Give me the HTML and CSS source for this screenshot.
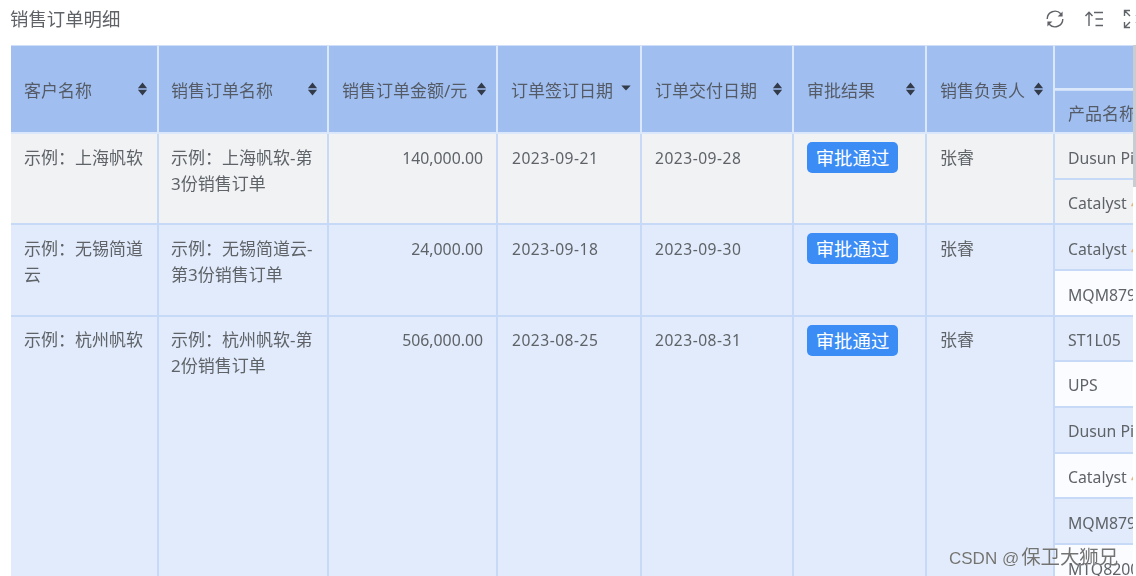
FILE: index.html
```html
<!DOCTYPE html>
<html lang="zh">
<head>
<meta charset="utf-8">
<title>销售订单明细</title>
<link rel="stylesheet" href="styles.css">
</head>
<body>
<svg class="defs" width="0" height="0" aria-hidden="true">
  <symbol id="sort" viewBox="0 0 10 14"><path d="M5 .5 9.6 6.200H.4zM5 13.500.4 7.800h9.200z"/></symbol>
  <symbol id="desc" viewBox="0 0 10 6"><path d="M.3.5h9.400L5 5.600z"/></symbol>
</svg>
<main class="page">
  <header class="toolbar">
    <h1 class="title">销售订单明细</h1>
    <div class="tools">
      <svg class="tool" viewBox="0 0 20 20"><path d="M2.200 10a7.800 7.800 0 0 1 13.600-5.200M17.800 10a7.800 7.800 0 0 1-13.600 5.200"/><path class="solid" d="M17.600 2.400v5h-5zM2.400 17.600v-5h5z"/></svg>
      <svg class="tool" viewBox="0 0 20 20"><path d="M5 17V3.500M1.500 7 5 3.200 8.500 7M10 3.500h9M11.500 10h7.500M11.500 16.500h7.500"/></svg>
      <svg class="tool" viewBox="0 0 20 20"><path d="M1.500 7V1.500H7M2 2l5 5M1.500 13v5.500H7M2 18l5-5M13 1.500h5.500V7M18 2l-5 5M13 18.500h5.500V13M18 18l-5-5"/></svg>
    </div>
  </header>
  <div class="table-wrap">
    <table class="grid">
      <colgroup>
        <col class="c1"><col class="c2"><col class="c3"><col class="c4"><col class="c5"><col class="c6"><col class="c7"><col class="c8">
      </colgroup>
      <thead>
        <tr>
          <th rowspan="2"><div class="th"><span>客户名称</span><svg class="sort"><use href="#sort"/></svg></div></th>
          <th rowspan="2"><div class="th"><span>销售订单名称</span><svg class="sort"><use href="#sort"/></svg></div></th>
          <th rowspan="2"><div class="th"><span>销售订单金额/元</span><svg class="sort"><use href="#sort"/></svg></div></th>
          <th rowspan="2"><div class="th"><span>订单签订日期</span><svg class="desc"><use href="#desc"/></svg></div></th>
          <th rowspan="2"><div class="th"><span>订单交付日期</span><svg class="sort"><use href="#sort"/></svg></div></th>
          <th rowspan="2"><div class="th"><span>审批结果</span><svg class="sort"><use href="#sort"/></svg></div></th>
          <th rowspan="2"><div class="th"><span>销售负责人</span><svg class="sort"><use href="#sort"/></svg></div></th>
          <th class="group"></th>
        </tr>
        <tr><th class="sub">产品名称</th></tr>
      </thead>
      <tbody>
        <tr class="grey">
          <td rowspan="2">示例：上海帆软</td>
          <td rowspan="2">示例：上海帆软-第<br>3份销售订单</td>
          <td rowspan="2" class="num">140,000.00</td>
          <td rowspan="2" class="lat">2023-09-21</td>
          <td rowspan="2" class="lat">2023-09-28</td>
          <td rowspan="2"><span class="badge">审批通过</span></td>
          <td rowspan="2">张睿</td>
          <td class="prod">Dusun Pi 开发板</td>
        </tr>
        <tr class="grey short"><td class="prod">Catalyst <span class="warn">4</span></td></tr>
        <tr class="blue">
          <td rowspan="2">示例：无锡简道<br>云</td>
          <td rowspan="2">示例：无锡简道云-<br>第3份销售订单</td>
          <td rowspan="2" class="num">24,000.00</td>
          <td rowspan="2" class="lat">2023-09-18</td>
          <td rowspan="2" class="lat">2023-09-30</td>
          <td rowspan="2"><span class="badge">审批通过</span></td>
          <td rowspan="2">张睿</td>
          <td class="prod">Catalyst <span class="warn">4</span></td>
        </tr>
        <tr class="blue"><td class="prod odd">MQM8790 开发板</td></tr>
        <tr class="blue short">
          <td rowspan="6">示例：杭州帆软</td>
          <td rowspan="6">示例：杭州帆软-第<br>2份销售订单</td>
          <td rowspan="6" class="num">506,000.00</td>
          <td rowspan="6" class="lat">2023-08-25</td>
          <td rowspan="6" class="lat">2023-08-31</td>
          <td rowspan="6"><span class="badge">审批通过</span></td>
          <td rowspan="6">张睿</td>
          <td class="prod">ST1L05</td>
        </tr>
        <tr class="blue tight"><td class="prod odd">UPS</td></tr>
        <tr class="blue tight"><td class="prod">Dusun Pi 开发板</td></tr>
        <tr class="blue short"><td class="prod odd">Catalyst <span class="warn">4</span></td></tr>
        <tr class="blue"><td class="prod">MQM8790 开发板</td></tr>
        <tr class="blue"><td class="prod odd">MTQ8200 开发板</td></tr>
      </tbody>
    </table>
  </div>
  <div class="scrollbar"></div>
  <div class="watermark"><span class="wm-lat">CSDN @</span>保卫大狮兄</div>
</main>
</body>
</html>
```

FILE: styles.css
```css
* { box-sizing: border-box; }
html, body { margin: 0; height: 100%; overflow: hidden; background: #fff; }
body {
  font-family: "Noto Sans", "Noto Sans CJK SC", sans-serif;
  color: #5f6368;
}
.defs { position: absolute; }
.page { height: 576px; overflow: hidden; position: relative; filter: blur(0.45px); }
.toolbar {
  height: 45px;
  display: flex;
  justify-content: space-between;
  align-items: flex-start;
  padding: 6px 0 0 10px;
}
.title { margin: 0; font-size: 18.4px; line-height: 26px; font-weight: 400; color: #5f6368; }
.tools { display: flex; gap: 19px; width: 91px; padding-top: 3px; overflow: hidden; flex: none; }
.tool { width: 20px; height: 20px; flex: none; fill: none; stroke: #5f6368; stroke-width: 1.4; }
.tool .solid { fill: #5f6368; stroke: none; }
.table-wrap { width: 1122px; margin-left: 11px; overflow: hidden; height: 531px; }
.grid { table-layout: fixed; border-collapse: separate; border-spacing: 0; width: 1244px; }
.c1 { width: 148px; } .c2 { width: 170px; } .c3 { width: 169px; } .c4 { width: 144px; }
.c5 { width: 152px; } .c6 { width: 133px; } .c7 { width: 128px; } .c8 { width: 200px; }
th {
  background: #a0bff0;
  border-right: 2px solid #dbe7fa;
  border-top: 1px solid #cfdff8;
  border-bottom: 2px solid #dbe7fa;
  font-size: 17px;
  font-weight: 400;
  color: #555b66;
  padding: 0 13px;
  text-align: left;
  height: 44px;
  white-space: nowrap;
}
th:nth-child(2), td:nth-child(2) { padding-left: 12px; }
td:nth-child(4) { padding-left: 14px; }
th.sub, th.group { border-right: 0; }
th.group { height: 45px; }
th.sub { height: 44px; padding-top: 1px; }
.th { display: flex; align-items: center; justify-content: space-between; margin-right: -4px; }
.sort { width: 11px; height: 14px; fill: #333b4a; flex: none; }
.desc { width: 10px; height: 6px; fill: #333b4a; flex: none; margin-top: -2px; }
td {
  height: 46px;
  padding: 11px 13px 0;
  vertical-align: top;
  font-size: 17px;
  line-height: 26px;
  white-space: nowrap;
  overflow: hidden;
  border-right: 2px solid #c6daf8;
  border-bottom: 2px solid #c6daf8;
  font-weight: 400;
  color: #5f6368;
}
.short td.prod { height: 45px; }
.short td, .tight td { padding-top: 10px; }
.grey td { background: #f0f2f4; }
.blue td { background: #e1ebfb; }
td.num { text-align: right; font-size: 15.8px; }
td.lat { font-size: 15.6px; letter-spacing: .5px; }
td.prod { font-size: 15.8px; border-right: 0; }
td.prod.odd { background: #fbfcff; }
.warn { color: #e8b27a; }
.badge {
  display: inline-block;
  width: 91px;
  height: 31px;
  margin-top: -3px;
  border-radius: 5px;
  background: #3c8cf6;
  color: #fff;
  text-align: center;
  font-size: 18.4px;
  line-height: 31px;
}
.short .badge { margin-top: -2px; }
.scrollbar {
  position: absolute;
  top: 45px;
  left: 1133px;
  width: 3px;
  height: 142px;
  background: #c9ccd1;
}
.watermark {
  position: absolute;
  left: 949px;
  top: 544px;
  font-size: 19.4px;
  line-height: 26px;
  color: rgba(90, 90, 90, .85);
  text-shadow: 0 0 1px rgba(255,255,255,.9);
  white-space: nowrap;
}
.wm-lat { font-family: "Liberation Sans", sans-serif; font-size: 17px; margin-right: 2px; }
```
